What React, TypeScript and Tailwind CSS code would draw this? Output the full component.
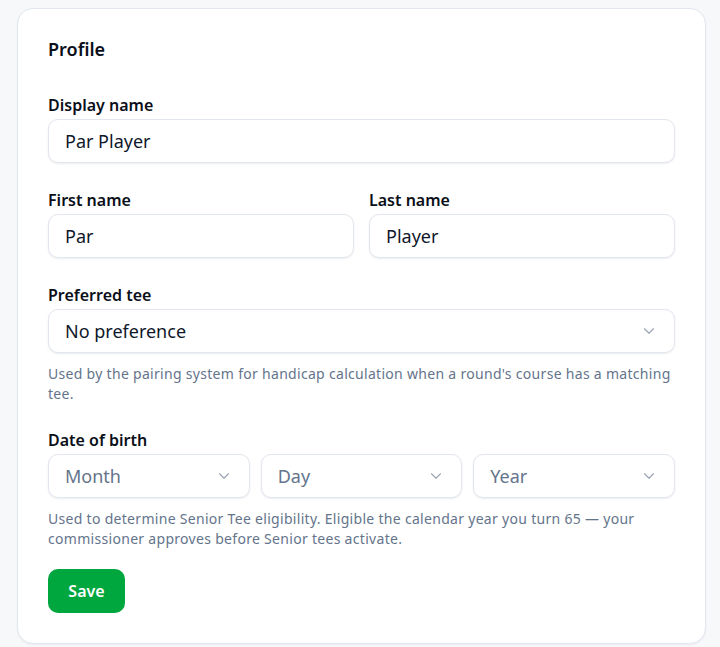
import { ChevronDown } from "lucide-react";

function Label({ children }: { children: React.ReactNode }) {
  return <div className="text-[16px] leading-6 font-semibold text-[#0b0f19]">{children}</div>;
}

function TextInput({ value }: { value: string }) {
  return (
    <input
      defaultValue={value}
      className="mt-0.5 h-[44px] w-full rounded-[10px] border border-[#e2e6ee] bg-white px-4 text-[18px] text-[#0f172a] shadow-[0_1px_2px_rgba(15,23,42,0.08)] outline-none"
    />
  );
}

function Select({ text, placeholder }: { text: string; placeholder?: boolean }) {
  return (
    <div className="mt-0.5 flex h-[44px] w-full items-center justify-between rounded-[10px] border border-[#e2e6ee] bg-white pl-4 pr-[16px] shadow-[0_1px_2px_rgba(15,23,42,0.08)]">
      <span className={placeholder ? "text-[18px] text-[#64748b]" : "text-[18px] text-[#0f172a]"}>{text}</span>
      <ChevronDown className="h-[18px] w-[18px] text-[#9aa3b2]" strokeWidth={1.5} />
    </div>
  );
}

export default function App() {
  return (
    <div className="min-h-[647px] bg-[#f7f8fa] pt-[8px] font-['Noto_Sans',sans-serif]">
      <div className="ml-[17px] w-[689px] rounded-[16px] border border-[#e2e6ee] bg-white px-[30px] pt-[26px] pb-[30px] shadow-[0_1px_2px_rgba(15,23,42,0.05)]">
        <div className="text-[18px] leading-7 font-semibold text-[#0b0f19]">Profile</div>

        <div className="mt-[30px]">
          <Label>Display name</Label>
          <TextInput value="Par Player" />
        </div>

        <div className="mt-[25px] grid grid-cols-2 gap-[15px]">
          <div>
            <Label>First name</Label>
            <TextInput value="Par" />
          </div>
          <div>
            <Label>Last name</Label>
            <TextInput value="Player" />
          </div>
        </div>

        <div className="mt-[25px]">
          <Label>Preferred tee</Label>
          <Select text="No preference" />
          <p className="mt-[11px] text-[14px] leading-5 tracking-[0.3px] text-[#64748b]">
            Used by the pairing system for handicap calculation when a round's course has a matching tee.
          </p>
        </div>

        <div className="mt-[24px]">
          <Label>Date of birth</Label>
          <div className="grid grid-cols-3 gap-[11px]">
            <Select text="Month" placeholder />
            <Select text="Day" placeholder />
            <Select text="Year" placeholder />
          </div>
          <p className="mt-[11px] text-[14px] leading-5 tracking-[0.3px] text-[#64748b]">
            Used to determine Senior Tee eligibility. Eligible the calendar year you turn 65 — your commissioner approves before Senior tees activate.
          </p>
        </div>

        <button className="mt-[20px] h-[44px] w-[77px] rounded-[10px] bg-[#00a63e] text-[16px] font-semibold text-white">
          Save
        </button>
      </div>
    </div>
  );
}
